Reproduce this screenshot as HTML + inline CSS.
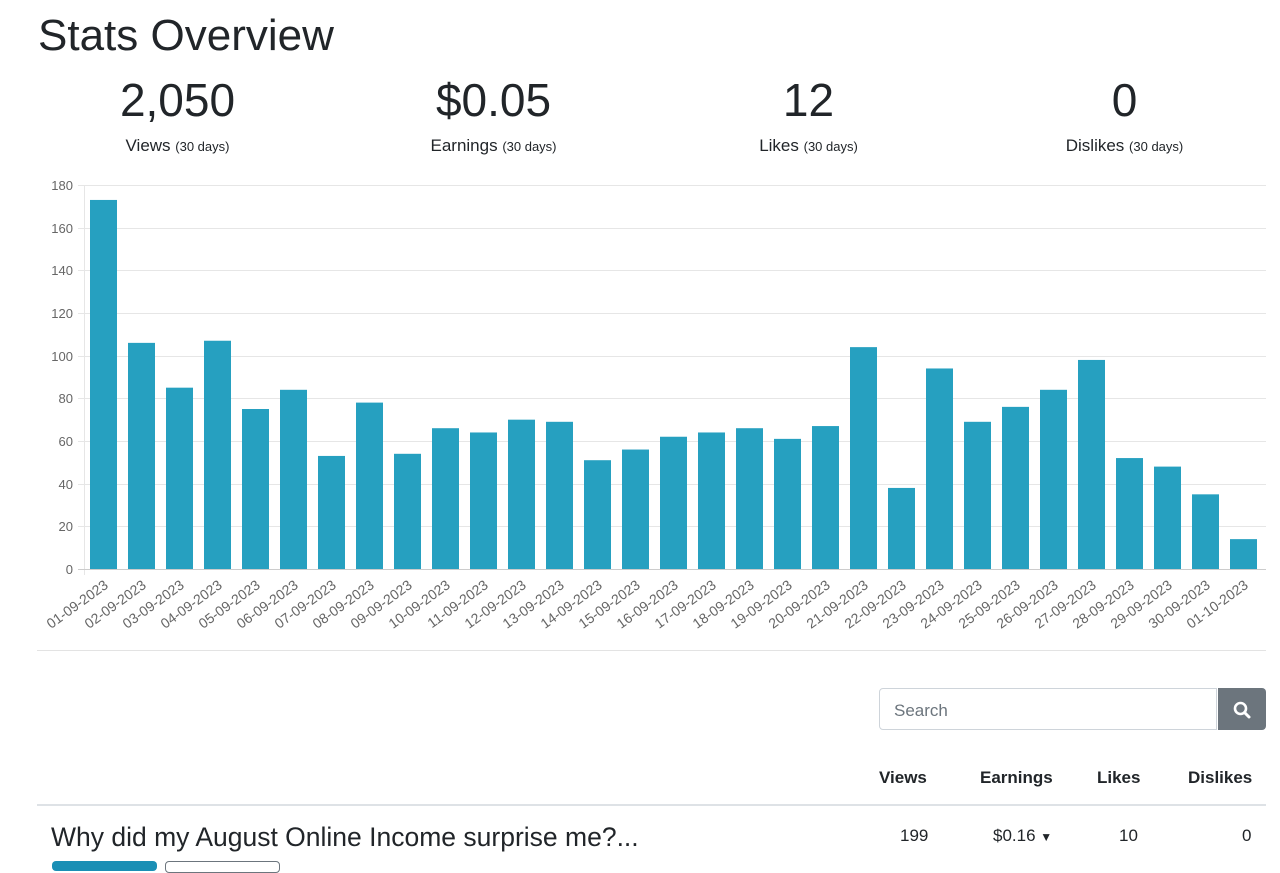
<!DOCTYPE html>
<html><head><meta charset="utf-8"><style>
body{margin:0;background:#fff;font-family:"Liberation Sans",sans-serif;color:#212529;width:1280px;height:864px;overflow:hidden;position:relative}
.a{position:absolute}
h1{position:absolute;left:38px;top:10px;margin:0;font-weight:400;font-size:44px;line-height:52px}
.stat{position:absolute;top:72px;width:315px;text-align:center}
.stat .n{font-size:46px;line-height:56px}
.stat .l{font-size:17px;margin-top:8px}
.stat .l small{font-size:13px}
</style></head><body>
<h1>Stats Overview</h1>
<div class="stat" style="left:20px"><div class="n">2,050</div><div class="l">Views <small>(30 days)</small></div></div>
<div class="stat" style="left:336px"><div class="n">$0.05</div><div class="l">Earnings <small>(30 days)</small></div></div>
<div class="stat" style="left:651px"><div class="n">12</div><div class="l">Likes <small>(30 days)</small></div></div>
<div class="stat" style="left:967px"><div class="n">0</div><div class="l">Dislikes <small>(30 days)</small></div></div>

<svg class="a" style="left:0;top:0" width="1280" height="660" font-family="Liberation Sans, sans-serif">
<g stroke="#e6e6e6" stroke-width="1">
<line x1="78" x2="1266" y1="185.5" y2="185.5"/><line x1="78" x2="1266" y1="228.5" y2="228.5"/>
<line x1="78" x2="1266" y1="270.5" y2="270.5"/><line x1="78" x2="1266" y1="313.5" y2="313.5"/>
<line x1="78" x2="1266" y1="356.5" y2="356.5"/><line x1="78" x2="1266" y1="398.5" y2="398.5"/>
<line x1="78" x2="1266" y1="441.5" y2="441.5"/><line x1="78" x2="1266" y1="484.5" y2="484.5"/>
<line x1="78" x2="1266" y1="526.5" y2="526.5"/>
<line x1="84.5" x2="84.5" y1="185" y2="575"/>
</g>
<line x1="78" x2="1266" y1="569.5" y2="569.5" stroke="#ccc"/>
<g fill="#666" font-size="13" text-anchor="end">
<text x="73" y="190">180</text><text x="73" y="233">160</text><text x="73" y="275">140</text>
<text x="73" y="318">120</text><text x="73" y="361">100</text><text x="73" y="403">80</text>
<text x="73" y="446">60</text><text x="73" y="489">40</text><text x="73" y="531">20</text><text x="73" y="574">0</text>
</g>
<g transform="translate(0,569) scale(1,-2.1333)" fill="#26a0c0">
<rect x="90" width="27" height="173"/><rect x="128" width="27" height="106"/><rect x="166" width="27" height="85"/>
<rect x="204" width="27" height="107"/><rect x="242" width="27" height="75"/><rect x="280" width="27" height="84"/>
<rect x="318" width="27" height="53"/><rect x="356" width="27" height="78"/><rect x="394" width="27" height="54"/>
<rect x="432" width="27" height="66"/><rect x="470" width="27" height="64"/><rect x="508" width="27" height="70"/>
<rect x="546" width="27" height="69"/><rect x="584" width="27" height="51"/><rect x="622" width="27" height="56"/>
<rect x="660" width="27" height="62"/><rect x="698" width="27" height="64"/><rect x="736" width="27" height="66"/>
<rect x="774" width="27" height="61"/><rect x="812" width="27" height="67"/><rect x="850" width="27" height="104"/>
<rect x="888" width="27" height="38"/><rect x="926" width="27" height="94"/><rect x="964" width="27" height="69"/>
<rect x="1002" width="27" height="76"/><rect x="1040" width="27" height="84"/><rect x="1078" width="27" height="98"/>
<rect x="1116" width="27" height="52"/><rect x="1154" width="27" height="48"/><rect x="1192" width="27" height="35"/>
<rect x="1230" width="27" height="14"/>
</g>
<g fill="#666" font-size="14" text-anchor="end">
<text transform="translate(109,587) rotate(-36)">01-09-2023</text>
<text transform="translate(147,587) rotate(-36)">02-09-2023</text>
<text transform="translate(185,587) rotate(-36)">03-09-2023</text>
<text transform="translate(223,587) rotate(-36)">04-09-2023</text>
<text transform="translate(261,587) rotate(-36)">05-09-2023</text>
<text transform="translate(299,587) rotate(-36)">06-09-2023</text>
<text transform="translate(337,587) rotate(-36)">07-09-2023</text>
<text transform="translate(375,587) rotate(-36)">08-09-2023</text>
<text transform="translate(413,587) rotate(-36)">09-09-2023</text>
<text transform="translate(451,587) rotate(-36)">10-09-2023</text>
<text transform="translate(489,587) rotate(-36)">11-09-2023</text>
<text transform="translate(527,587) rotate(-36)">12-09-2023</text>
<text transform="translate(565,587) rotate(-36)">13-09-2023</text>
<text transform="translate(603,587) rotate(-36)">14-09-2023</text>
<text transform="translate(641,587) rotate(-36)">15-09-2023</text>
<text transform="translate(679,587) rotate(-36)">16-09-2023</text>
<text transform="translate(717,587) rotate(-36)">17-09-2023</text>
<text transform="translate(755,587) rotate(-36)">18-09-2023</text>
<text transform="translate(793,587) rotate(-36)">19-09-2023</text>
<text transform="translate(831,587) rotate(-36)">20-09-2023</text>
<text transform="translate(869,587) rotate(-36)">21-09-2023</text>
<text transform="translate(907,587) rotate(-36)">22-09-2023</text>
<text transform="translate(945,587) rotate(-36)">23-09-2023</text>
<text transform="translate(983,587) rotate(-36)">24-09-2023</text>
<text transform="translate(1021,587) rotate(-36)">25-09-2023</text>
<text transform="translate(1059,587) rotate(-36)">26-09-2023</text>
<text transform="translate(1097,587) rotate(-36)">27-09-2023</text>
<text transform="translate(1135,587) rotate(-36)">28-09-2023</text>
<text transform="translate(1173,587) rotate(-36)">29-09-2023</text>
<text transform="translate(1211,587) rotate(-36)">30-09-2023</text>
<text transform="translate(1249,587) rotate(-36)">01-10-2023</text>
</g>
</svg>

<div class="a" style="left:37px;top:650px;width:1229px;height:1px;background:#e3e3e3"></div>
<div class="a" style="left:879px;top:688px;width:338px;height:42px;border:1px solid #ced4da;border-radius:4px 0 0 4px;box-sizing:border-box"></div>
<div class="a" style="left:894px;top:701px;font-size:17px;color:#6c757d">Search</div>
<div class="a" style="left:1218px;top:688px;width:48px;height:42px;background:#6c757d;border-radius:0 4px 4px 0"></div>
<svg class="a" style="left:1232px;top:700px" width="20" height="20"><circle cx="8.5" cy="8.5" r="5.5" fill="none" stroke="#fff" stroke-width="2.6"/><line x1="12.5" y1="12.5" x2="17" y2="17" stroke="#fff" stroke-width="3" stroke-linecap="round"/></svg>

<div class="a" style="left:879px;top:768px;font-size:17px;font-weight:700">Views</div>
<div class="a" style="left:980px;top:768px;font-size:17px;font-weight:700">Earnings</div>
<div class="a" style="left:1097px;top:768px;font-size:17px;font-weight:700">Likes</div>
<div class="a" style="left:1188px;top:768px;font-size:17px;font-weight:700">Dislikes</div>
<div class="a" style="left:37px;top:804px;width:1229px;height:2px;background:#dee2e6"></div>
<div class="a" style="left:51px;top:822px;font-size:26.5px">Why did my August Online Income surprise me?...</div>
<div class="a" style="left:900px;top:826px;font-size:17px">199</div>
<div class="a" style="left:993px;top:826px;font-size:17px">$0.16 <span style="font-size:12px">&#9660;</span></div>
<div class="a" style="left:1119px;top:826px;font-size:17px">10</div>
<div class="a" style="left:1242px;top:826px;font-size:17px">0</div>
<div class="a" style="left:52px;top:861px;width:105px;height:10px;background:#1a8fb5;border-radius:4px"></div>
<div class="a" style="left:165px;top:861px;width:113px;height:10px;background:#fff;border:1px solid #6c757d;border-radius:4px"></div>
</body></html>
